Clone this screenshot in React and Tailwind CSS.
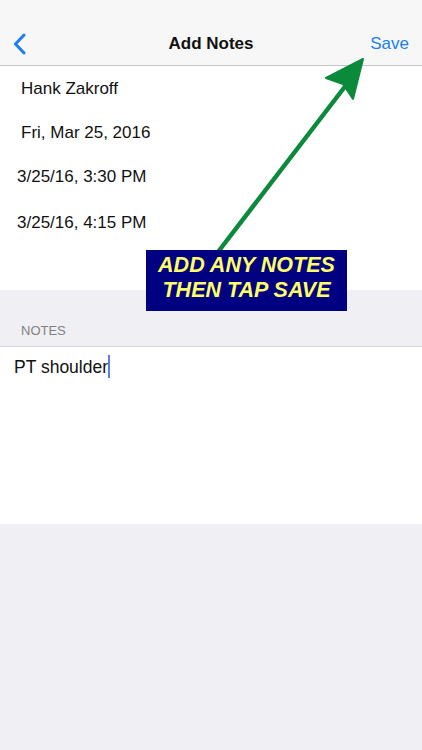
import React from 'react';

const rows = [
  { text: 'Hank Zakroff', h: 'h-[45px]', pl: 'pl-[21px]' },
  { text: 'Fri, Mar 25, 2016', h: 'h-[43px]', pl: 'pl-[21px]' },
  { text: '3/25/16, 3:30 PM', h: 'h-[46px]', pl: 'pl-[17px]' },
  { text: '3/25/16, 4:15 PM', h: 'h-[45px]', pl: 'pl-[17px]' },
];

export default function App() {
  return (
    <div
      className="relative w-[422px] h-[750px] overflow-hidden bg-[#efeff4] text-[#111]"
      style={{ fontFamily: '"Liberation Sans", Arial, sans-serif' }}
    >
      {/* nav bar */}
      <div className="relative h-[66px] bg-[#f7f7f7] border-b border-[#c4c4c8] flex items-end pb-[11px]">
        <svg className="absolute left-[12px] top-[33px]" width="16" height="22" viewBox="0 0 16 22">
          <path d="M12 2 L3.5 11 L12 20" fill="none" stroke="#1a7ff2" strokeWidth="3" strokeLinecap="round" strokeLinejoin="round" />
        </svg>
        <div className="flex-1 text-center text-[17px] font-bold leading-[20px]">Add Notes</div>
        <div className="absolute right-[13px] top-[34px] text-[17px] leading-[20px] text-[#1a7ff2]">Save</div>
      </div>

      {/* info rows */}
      <div className="bg-white">
        {rows.map((r) => (
          <div key={r.text} className={`${r.h} ${r.pl} flex items-center text-[17px]`}>
            {r.text}
          </div>
        ))}
        <div className="h-[45px]" />
      </div>

      {/* notes header */}
      <div className="h-[57px] flex items-end pl-[21px] pb-[6px] text-[13px] text-[#808085] border-b border-[#d6d6da]">
        NOTES
      </div>

      {/* notes field */}
      <div className="h-[177px] bg-white pl-[14px] pt-[8px]">
        <div className="flex items-center text-[17.5px] leading-[22px]">
          <span>PT shoulder</span>
          <span className="inline-block w-[2px] h-[23px] bg-[#5b7fe0]" />
        </div>
      </div>

      {/* callout overlay */}
      <svg className="absolute left-0 top-0" width="422" height="750" viewBox="0 0 422 750">
        <line x1="218" y1="252" x2="350" y2="80" stroke="#0c8a3c" strokeWidth="4.5" strokeLinecap="round" />
        <path d="M363 59 L326 78 L343 84 L353 99 Z" fill="#0c8a3c" stroke="#0c8a3c" strokeWidth="2" strokeLinejoin="round" />
      </svg>
      <div className="absolute left-[146px] top-[250px] w-[201px] h-[61px] bg-[#000080] flex flex-col items-center justify-center pb-[6px] text-[21.5px] leading-[25px] font-bold italic text-[#ffff66]">
        <div>ADD ANY NOTES</div>
        <div>THEN TAP SAVE</div>
      </div>
    </div>
  );
}
